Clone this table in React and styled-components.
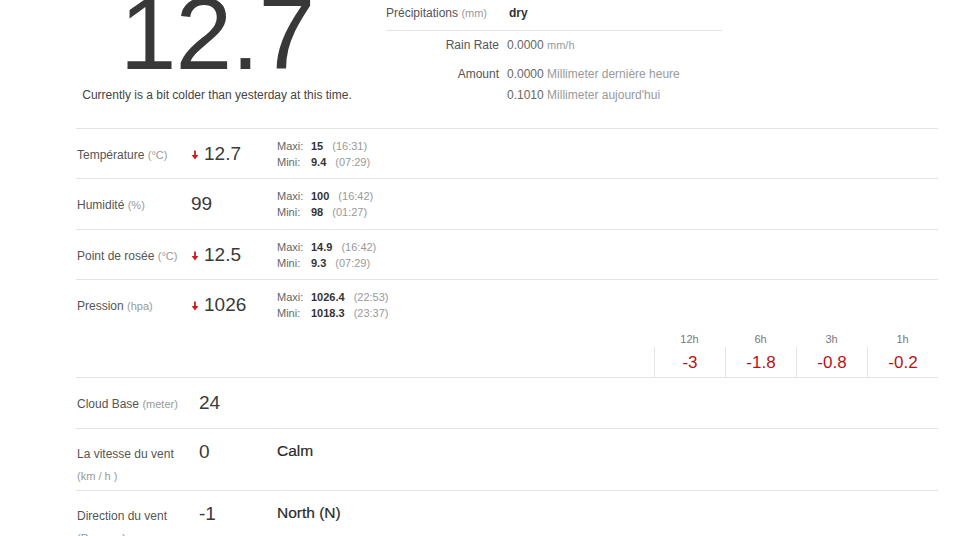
import React from "react";
import styled, { createGlobalStyle } from "styled-components";

const GlobalStyle = createGlobalStyle`
  body {
    margin: 0;
    background: #fff;
    font-family: "Liberation Sans", Arial, sans-serif;
    color: #555;
    overflow: hidden;
  }
`;

const rows = [
  {
    label: "Température",
    unit: "(°C)",
    value: "12.7",
    down: true,
    height: 50,
    maxi: ["15", "(16:31)"],
    mini: ["9.4", "(07:29)"],
  },
  {
    label: "Humidité",
    unit: "(%)",
    value: "99",
    height: 51,
    maxi: ["100", "(16:42)"],
    mini: ["98", "(01:27)"],
  },
  {
    label: "Point de rosée",
    unit: "(°C)",
    value: "12.5",
    down: true,
    height: 50,
    maxi: ["14.9", "(16:42)"],
    mini: ["9.3", "(07:29)"],
  },
];

const trends = [
  { h: "12h", v: "-3" },
  { h: "6h", v: "-1.8" },
  { h: "3h", v: "-0.8" },
  { h: "1h", v: "-0.2" },
];

const DownArrow = () => (
  <Arrow width="8" height="10" viewBox="0 0 8 10">
    <path d="M4 0.5 V7" stroke="#d01a1a" strokeWidth="1.8" />
    <path d="M0.6 5 L4 9.5 L7.4 5 Z" fill="#d01a1a" />
  </Arrow>
);

const MinMax = ({ maxi, mini }) => (
  <Extremes>
    <Line>
      <Tag>Maxi:</Tag>
      <Strong>{maxi[0]}</Strong>
      <Time>{maxi[1]}</Time>
    </Line>
    <Line>
      <Tag>Mini:</Tag>
      <Strong>{mini[0]}</Strong>
      <Time>{mini[1]}</Time>
    </Line>
  </Extremes>
);

const App = () => {
  return (
    <Page>
      <GlobalStyle />
      <Top>
        <Current>
          <BigNumber>12.7</BigNumber>
          <Remark>Currently is a bit colder than yesterday at this time.</Remark>
        </Current>

        <Rain>
          <RainHead>
            <RainLabel>
              Précipitations <Unit>(mm)</Unit>
            </RainLabel>
            <Dry>dry</Dry>
          </RainHead>
          <RainGrid>
            <RainKey>Rain Rate</RainKey>
            <RainVal>
              0.0000 <Unit>mm/h</Unit>
            </RainVal>
          </RainGrid>
          <RainGrid $gap>
            <RainKey>Amount</RainKey>
            <RainVal>
              0.0000 <Soft>Millimeter dernière heure</Soft>
            </RainVal>
            <span />
            <RainVal>
              0.1010 <Soft>Millimeter aujourd'hui</Soft>
            </RainVal>
          </RainGrid>
        </Rain>
      </Top>

      <List>
        {rows.map((r) => (
          <Row key={r.label} $height={r.height}>
            <Label>
              {r.label} <Unit>{r.unit}</Unit>
            </Label>
            <Value>
              {r.down && <DownArrow />}
              {r.value}
            </Value>
            <MinMax maxi={r.maxi} mini={r.mini} />
          </Row>
        ))}

        <Block>
          <Row $plain $height={49}>
            <Label>
              Pression <Unit>(hpa)</Unit>
            </Label>
            <Value>
              <DownArrow />
              1026
            </Value>
            <MinMax maxi={["1026.4", "(22:53)"]} mini={["1018.3", "(23:37)"]} />
          </Row>
          <Trends>
            {trends.map((t) => (
              <Trend key={t.h}>
                <TrendHead>{t.h}</TrendHead>
                <TrendValue>{t.v}</TrendValue>
              </Trend>
            ))}
          </Trends>
        </Block>

        <Row $height={51}>
          <Label>
            Cloud Base <Unit>(meter)</Unit>
          </Label>
          <Value $shift>24</Value>
        </Row>

        <Row $top $height={62}>
          <Label>
            La vitesse du vent
            <br />
            <Unit>(km / h )</Unit>
          </Label>
          <Value $shift>0</Value>
          <Word>Calm</Word>
        </Row>

        <Row $top $height={62}>
          <Label>
            Direction du vent
            <br />
            <Unit>(Degrees)</Unit>
          </Label>
          <Value $shift>-1</Value>
          <Word>North (N)</Word>
        </Row>
      </List>
    </Page>
  );
};

const Page = styled.div`
  width: 862px;
  margin-left: 76px;
`;

const Top = styled.div`
  display: flex;
  height: 128px;
`;

const Current = styled.div`
  width: 282px;
  text-align: center;
`;

const BigNumber = styled.div`
  font-size: 102px;
  line-height: 88px;
  margin-top: -10px;
  color: #383838;
  letter-spacing: -1px;
`;

const Remark = styled.div`
  font-size: 12px;
  line-height: 15px;
  margin-top: 10px;
  color: #444;
`;

const Rain = styled.div`
  margin-left: 28px;
  width: 336px;
`;

const RainHead = styled.div`
  display: grid;
  grid-template-columns: 123px 1fr;
  align-items: center;
  height: 26px;
  padding-bottom: 4px;
  border-bottom: 1px solid #e4e4e4;
`;

const RainLabel = styled.div`
  font-size: 12px;
  color: #555;
`;

const Dry = styled.div`
  font-size: 12px;
  font-weight: 700;
  color: #333;
`;

const RainGrid = styled.div`
  display: grid;
  grid-template-columns: 113px 1fr;
  column-gap: 8px;
  line-height: 21px;
  font-size: 12px;
  margin-top: ${(p) => (p.$gap ? "8px" : "4px")};
`;

const RainKey = styled.div`
  text-align: right;
  color: #555;
`;

const RainVal = styled.div`
  color: #666;
`;

const Unit = styled.span`
  font-size: 11px;
  color: #999;
`;

const Soft = styled.span`
  color: #999;
`;

const List = styled.div`
  display: flex;
  flex-direction: column;
`;

const Row = styled.div`
  display: grid;
  grid-template-columns: 114px 86px 1fr;
  align-items: ${(p) => (p.$top ? "start" : "center")};
  box-sizing: border-box;
  height: ${(p) => p.$height}px;
  padding-top: ${(p) => (p.$top ? "12px" : "0")};
  padding-left: 1px;
  border-top: ${(p) => (p.$plain ? "none" : "1px solid #e4e4e4")};
`;

const Block = styled.div`
  border-top: 1px solid #e4e4e4;
`;

const Label = styled.div`
  font-size: 12px;
  line-height: 22px;
  color: #555;
  padding-top: 2px;
`;

const Value = styled.div`
  display: flex;
  align-items: center;
  font-size: 19px;
  line-height: 22px;
  color: #3a3a3a;
  padding-left: ${(p) => (p.$shift ? "8px" : "0")};
`;

const Arrow = styled.svg`
  margin: 3px 5px 0 0;
  flex: none;
`;

const Extremes = styled.div`
  display: flex;
  flex-direction: column;
  font-size: 11px;
  line-height: 16px;
`;

const Line = styled.div`
  display: flex;
  align-items: baseline;
`;

const Tag = styled.span`
  color: #666;
  width: 34px;
`;

const Strong = styled.span`
  font-weight: 700;
  color: #333;
  margin-right: 9px;
`;

const Time = styled.span`
  color: #999;
`;

const Word = styled.div`
  font-size: 15.5px;
  line-height: 20px;
  color: #2a2a2a;
  -webkit-text-stroke: 0.2px #2a2a2a;
`;

const Trends = styled.div`
  display: flex;
  justify-content: flex-end;
  padding-top: 3px;
`;

const Trend = styled.div`
  width: 71px;
  text-align: center;
`;

const TrendHead = styled.div`
  font-size: 11px;
  line-height: 15px;
  color: #777;
`;

const TrendValue = styled.div`
  height: 30px;
  line-height: 31px;
  border-left: 1px solid #e4e4e4;
  font-size: 17px;
  color: #b8121b;
`;

export default App;
